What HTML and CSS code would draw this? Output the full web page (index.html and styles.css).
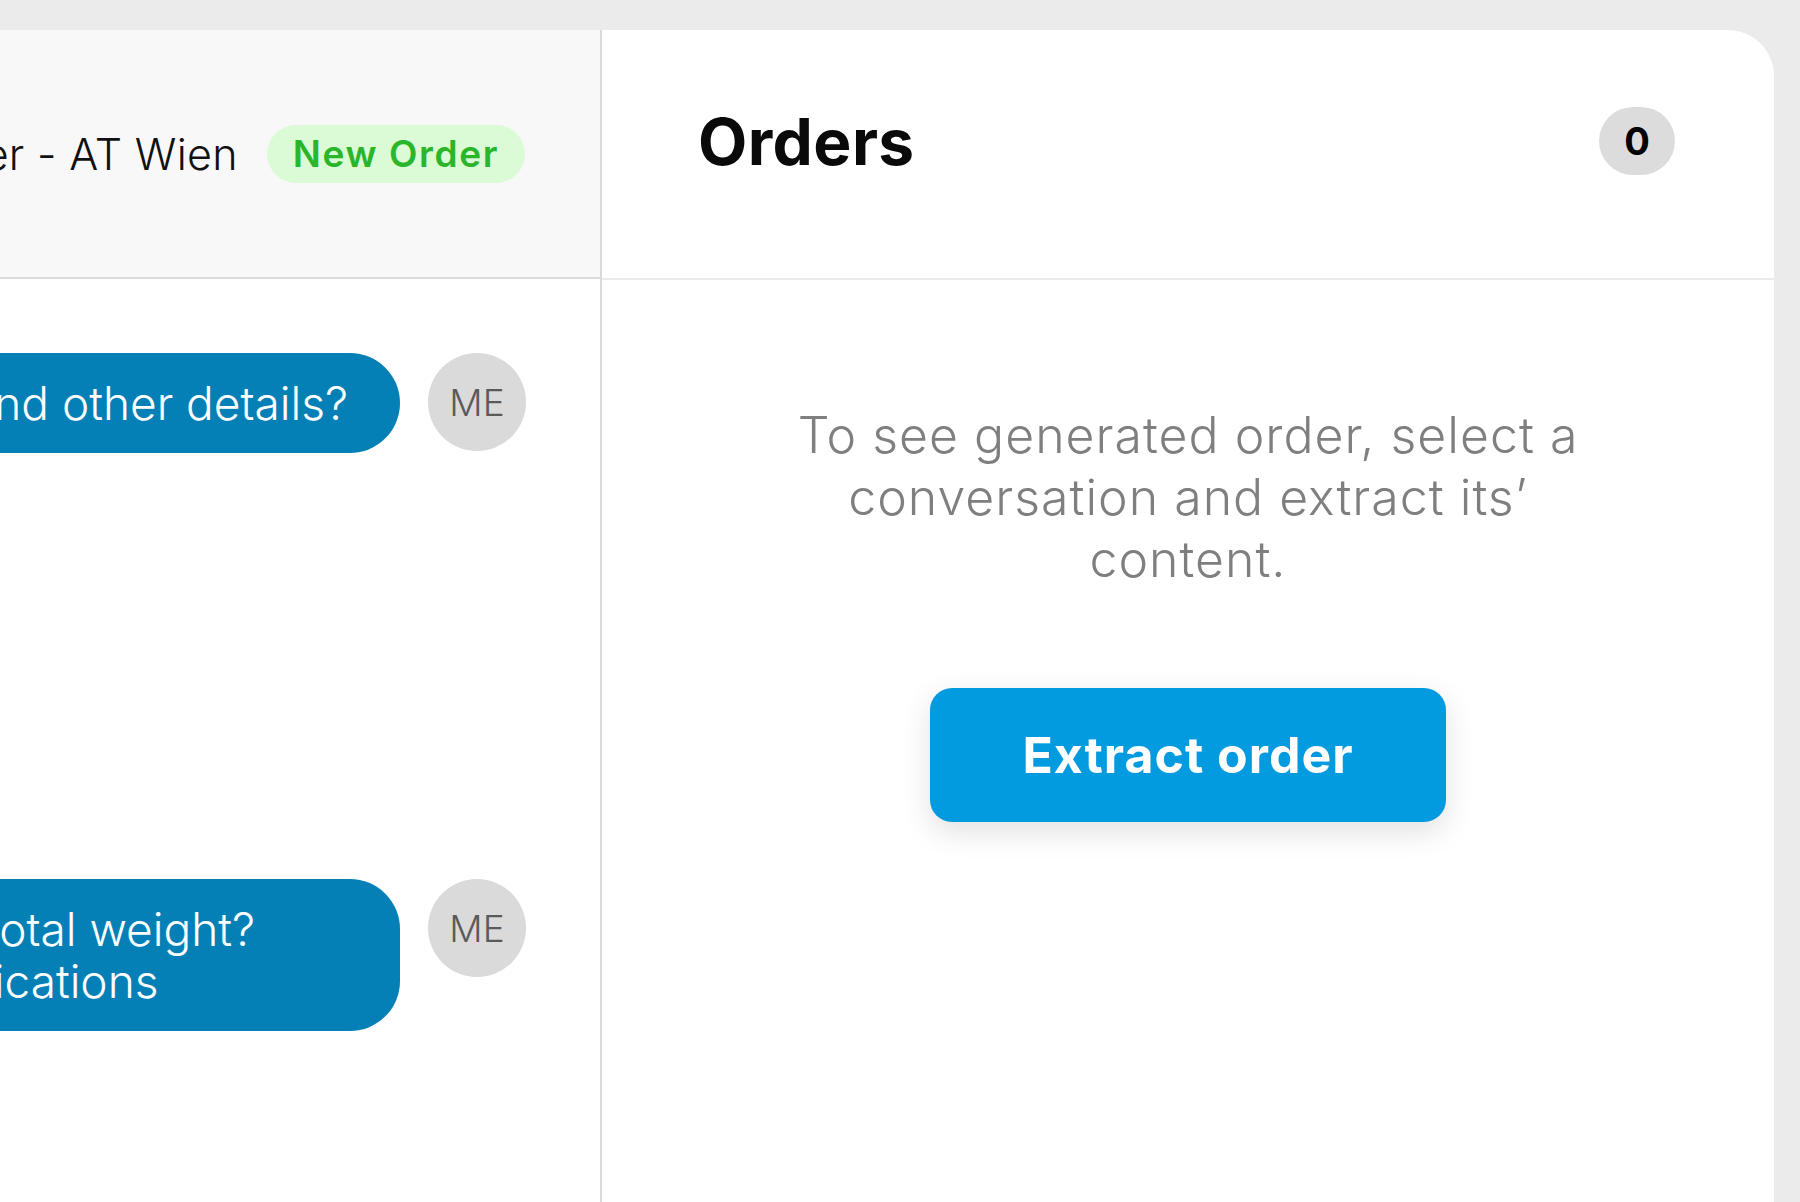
FILE: index.html
```html
<!DOCTYPE html>
<html>
  <head>
    <title>Orders</title>
    <link rel="stylesheet" href="styles.css">
  </head>
  <body>
    <div class="app">
      <div class="card">
        <section class="chat">
          <header class="chat-head">
            <span class="chat-title">Spediteur Gruber - AT Wien</span>
            <span class="tag-new">New Order</span>
          </header>
          <div class="messages">
            <div class="msg">
              <div class="bubble">Could you confirm the pickup date and other details?</div>
              <div class="avatar">ME</div>
            </div>
            <div class="msg">
              <div class="bubble bubble-long">Could you tell me the total weight?<br>and the loading specifications</div>
              <div class="avatar">ME</div>
            </div>
          </div>
        </section>

        <section class="orders">
          <header class="orders-head">
            <h2>Orders</h2>
            <span class="count">0</span>
          </header>
          <div class="orders-empty">
            <p>To see generated order, select a conversation and extract its’ content.</p>
            <button class="extract-btn">Extract order</button>
          </div>
        </section>
      </div>
    </div>
  </body>
</html>
```

FILE: styles.css
```css
body {
  margin: 0;
  background-color: #eaebea;
  font-family: Inter, "Noto Sans", sans-serif;
  overflow: hidden;
}
.app {
  height: 1202px;
  box-sizing: border-box;
  padding: 30px 26px 0 0;
}
.card {
  display: grid;
  grid-template-columns: 602px 1fr;
  height: 100%;
  background-color: #fff;
  border-top-right-radius: 46px;
  overflow: hidden;
}

/* chat column */
.chat {
  min-width: 0;
  overflow: hidden;
  border-right: 2px solid #d9d9d9;
}
.chat-head {
  height: 249px;
  box-sizing: border-box;
  display: flex;
  align-items: center;
  justify-content: flex-end;
  gap: 29px;
  padding-right: 75px;
  background-color: #f8f8f8;
  border-bottom: 2px solid #dcdcdc;
  white-space: nowrap;
}
.chat-title {
  font-size: 43px;
  font-weight: 300;
  color: #111;
  letter-spacing: 0.3px;
}
.tag-new {
  display: flex;
  align-items: center;
  height: 58px;
  padding: 0 26px;
  border-radius: 29px;
  background-color: #dafbd5;
  color: #2bb52b;
  font-size: 37px;
  font-weight: 600;
  letter-spacing: 1.6px;
}
.messages {
  display: flex;
  flex-direction: column;
  gap: 426px;
  padding: 74px 74px 0 0;
}
.msg {
  display: flex;
  justify-content: flex-end;
  align-items: flex-start;
  gap: 28px;
}
.bubble {
  flex: none;
  padding: 24px 52px;
  border-radius: 50px;
  background-color: #0580b7;
  color: #fff;
  font-size: 46px;
  font-weight: 300;
  line-height: 52px;
  white-space: nowrap;
}
.bubble-long {
  padding-right: 145px;
}
.avatar {
  flex: none;
  display: flex;
  align-items: center;
  justify-content: center;
  width: 98px;
  height: 98px;
  border-radius: 50%;
  background-color: #dadada;
  color: #5a5a5a;
  font-size: 37px;
  font-weight: 300;
}

/* orders column */
.orders {
  min-width: 0;
  display: flex;
  flex-direction: column;
}
.orders-head {
  height: 250px;
  box-sizing: border-box;
  display: flex;
  align-items: center;
  justify-content: space-between;
  padding: 0 99px 26px 96px;
  border-bottom: 2px solid #ebebeb;
}
.orders-head h2 {
  margin: 0;
  font-size: 64px;
  font-weight: 700;
  color: #0a0a0a;
  letter-spacing: 0.4px;
}
.count {
  display: flex;
  align-items: center;
  justify-content: center;
  min-width: 76px;
  height: 68px;
  border-radius: 34px;
  background-color: #dcdcdc;
  font-size: 38px;
  font-weight: 700;
}
.orders-empty {
  display: flex;
  flex-direction: column;
  align-items: center;
  padding-top: 124px;
  text-align: center;
}
.orders-empty p {
  max-width: 820px;
  margin: 0;
  color: #7f7f7f;
  font-size: 50px;
  font-weight: 300;
  line-height: 62px;
  letter-spacing: 1px;
}
.extract-btn {
  width: 516px;
  height: 134px;
  margin-top: 98px;
  border: none;
  border-radius: 22px;
  background-color: #039be0;
  color: #fff;
  font-family: inherit;
  font-size: 50px;
  font-weight: 700;
  letter-spacing: 1px;
  box-shadow: 0 10px 30px rgba(0, 0, 0, 0.12);
  cursor: pointer;
}
```
